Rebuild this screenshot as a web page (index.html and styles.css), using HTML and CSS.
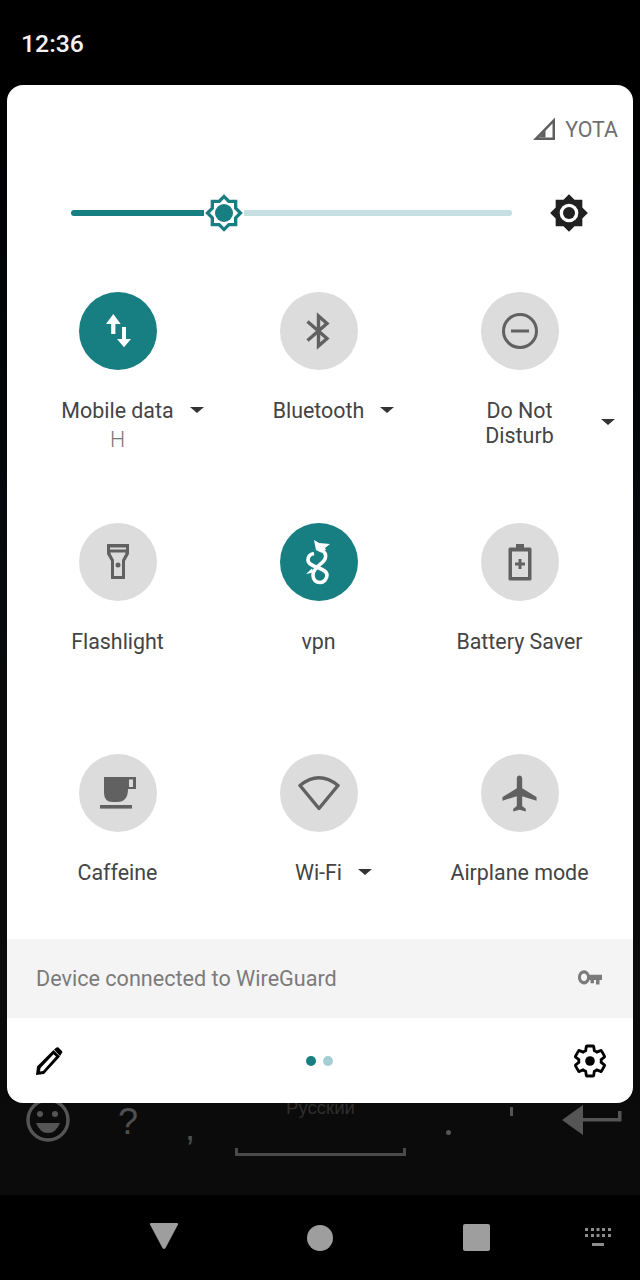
FILE: index.html
```html
<!DOCTYPE html>
<html lang="en">
<head>
    <meta charset="UTF-8">
    <title>Quick settings</title>
    <link rel="stylesheet" href="styles.css">
</head>
<body>
    <div class="status">
        <span class="clock">12:36</span>
    </div>

    <div class="panel">
        <div class="carrier">
            <svg class="signal" width="26" height="26" viewBox="0 0 26 26">
                <path d="M23 1.500 L1 24 H23 Z M20.500 7.500 V21.500 H7 Z" fill="#5f5f5f" fill-rule="evenodd"/>
                <path d="M13.500 14 L7 21.500 H13.500 Z" fill="#5f5f5f"/>
            </svg>
            <span>YOTA</span>
        </div>

        <div class="brightness">
            <div class="slider">
                <div class="track-on"></div>
                <svg class="thumb" width="40" height="40" viewBox="0 0 24 24">
                    <path d="M12 1.500 L15.100 4.500 H19.500 V8.900 L22.500 12 L19.500 15.100 V19.500 H15.100 L12 22.500 L8.900 19.500 H4.500 V15.100 L1.500 12 L4.500 8.900 V4.500 H8.900 Z" fill="#fff"/>
                    <path d="M20 8.690 V4 H15.310 L12 .69 8.690 4 H4 V8.690 L.69 12 4 15.310 V20 H8.690 L12 23.310 15.310 20 H20 V15.310 L23.310 12 Z M18 14.480 V18 H14.480 L12 20.480 9.520 18 H6 V14.480 L3.520 12 6 9.520 V6 H9.520 L12 3.520 14.480 6 H18 V9.520 L20.480 12 Z" fill="#177e82"/>
                    <circle cx="12" cy="12" r="5.400" fill="#177e82"/>
                </svg>
                <div class="track-off"></div>
            </div>
            <svg class="auto" width="40" height="40" viewBox="0 0 24 24">
                <path d="M20 8.690 V4 H15.310 L12 .69 8.690 4 H4 V8.690 L.69 12 4 15.310 V20 H8.690 L12 23.310 15.310 20 H20 V15.310 L23.310 12 Z" fill="#212121"/>
                <circle cx="12" cy="12" r="5.600" fill="#fff"/>
                <circle cx="12" cy="12" r="3.600" fill="#212121"/>
            </svg>
        </div>

        <div class="tiles">
            <div class="tile">
                <div class="circle on">
                    <svg width="40" height="40" viewBox="0 0 40 40">
                        <path d="M15.300 3 L8 13 H13.200 V23 H17.400 V13 L22.700 13 Z M24 16 H28 V28 H33 L26 36.200 L19 28 H24 Z" fill="#fff"/>
                    </svg>
                </div>
                <div class="label">
                    <span>Mobile data</span><i class="caret"></i>
                </div>
                <div class="sub">H</div>
            </div>
            <div class="tile">
                <div class="circle">
                    <svg width="40" height="40" viewBox="0 0 40 40">
                        <path d="M8.500 10.500 L28 27.500 L19.500 35 V5 L28 12.500 L8.500 29.500" fill="none" stroke="#616161" stroke-width="3.400"/>
                    </svg>
                </div>
                <div class="label">
                    <span>Bluetooth</span><i class="caret"></i>
                </div>
            </div>
            <div class="tile">
                <div class="circle">
                    <svg width="40" height="40" viewBox="0 0 40 40">
                        <circle cx="20" cy="20" r="16.500" fill="none" stroke="#616161" stroke-width="3"/>
                        <rect x="11" y="18.500" width="18" height="3" fill="#616161"/>
                    </svg>
                </div>
                <div class="label wrap">
                    <span>Do Not<br>Disturb</span><i class="caret"></i>
                </div>
            </div>

            <div class="tile">
                <div class="circle">
                    <svg width="40" height="40" viewBox="0 0 40 40">
                        <path d="M9 2 H31 V12 L27 19 V37 H13 V19 L9 12 Z" fill="#616161"/>
                        <rect x="12" y="5.500" width="16" height="2" fill="#dcdcdc"/>
                        <path d="M12.500 10.500 H27.500 V11.500 L24 18 V34 H16 V18 L12.500 11.500 Z" fill="#dcdcdc"/>
                        <circle cx="20" cy="23" r="2.500" fill="#616161"/>
                    </svg>
                </div>
                <div class="label"><span>Flashlight</span></div>
            </div>
            <div class="tile">
                <div class="circle on">
                    <!-- wireguard dragon -->
                    <svg width="40" height="56" viewBox="0 0 40 56">
                        <path d="M15 6 L20 9 L31 10 L26 14 L27 16 L21 16 L23 19 L17 16 Z" fill="#fff"/>
                        <path d="M19 15 C25 16 28 20 26 25 C24 30 14 33 14 41 C14 46 17 48.500 21 48.500 C25 48.500 28 45 28 41 C28 33 9 34 9 26 C9 22 12 20 15 19.500" fill="none" stroke="#fff" stroke-width="3.600"/>
                        <path d="M7 40 L13 34.500 L14.500 38.500 Z" fill="#fff"/>
                    </svg>
                </div>
                <div class="label"><span>vpn</span></div>
            </div>
            <div class="tile">
                <div class="circle">
                    <svg width="40" height="40" viewBox="0 0 40 40">
                        <path d="M16 2 H24 V5.500 H30 Q31.500 5.500 31.500 7 V37 Q31.500 38.500 30 38.500 H10 Q8.500 38.500 8.500 37 V7 Q8.500 5.500 10 5.500 H16 Z" fill="#616161"/>
                        <rect x="12" y="9.500" width="16" height="25.500" fill="#dcdcdc"/>
                        <path d="M18.500 17 H21.500 V20.500 H25 V23.500 H21.500 V27 H18.500 V23.500 H15 V20.500 H18.500 Z" fill="#616161"/>
                    </svg>
                </div>
                <div class="label"><span>Battery Saver</span></div>
            </div>

            <div class="tile">
                <div class="circle">
                    <svg width="40" height="40" viewBox="0 0 40 40">
                        <path d="M6 4 H38 V16 H30 Q30 29 19 29 H15 Q6 29 6 20 Z M31 6.500 V14 H35 V6.500 Z" fill="#616161" fill-rule="evenodd"/>
                        <rect x="2" y="32" width="32" height="3.600" fill="#616161"/>
                    </svg>
                </div>
                <div class="label"><span>Caffeine</span></div>
            </div>
            <div class="tile">
                <div class="circle">
                    <svg width="44" height="40" viewBox="0 0 44 40">
                        <path d="M3 12.500 Q22 -3 41 12.500 L22 35.500 Z" fill="none" stroke="#616161" stroke-width="3.400" stroke-linejoin="round"/>
                    </svg>
                </div>
                <div class="label">
                    <span>Wi-Fi</span><i class="caret"></i>
                </div>
            </div>
            <div class="tile">
                <div class="circle">
                    <svg width="43" height="43" viewBox="0 0 24 24">
                        <path d="M21.500 16 V14 L13.500 9 V3.500 C13.500 2.670 12.830 2 12 2 S10.500 2.670 10.500 3.500 V9 L2.500 14 V16 L10.500 13.500 V19 L8.500 20.500 V22 L12 21 L15.500 22 V20.500 L13.500 19 V13.500 Z" fill="#616161"/>
                    </svg>
                </div>
                <div class="label"><span>Airplane mode</span></div>
            </div>
        </div>

        <div class="banner">
            <span>Device connected to WireGuard</span>
            <svg class="key" width="26" height="18" viewBox="0 0 26 14" preserveAspectRatio="none">
                <path d="M7 1 C9.500 1 11.600 2.400 12.600 4.500 H25 V8.500 H22.500 V12 H19 V8.500 H17 V11 H13.500 V8.500 H12.600 C11.600 10.600 9.500 12 7 12 C3.700 12 1 9.500 1 6.500 C1 3.500 3.700 1 7 1 Z M7 3.500 C5.300 3.500 3.900 4.800 3.900 6.500 C3.900 8.200 5.300 9.500 7 9.500 C8.700 9.500 10.100 8.200 10.100 6.500 C10.100 4.800 8.700 3.500 7 3.500 Z" fill="#7b7b7b" fill-rule="evenodd"/>
            </svg>
        </div>

        <div class="footer">
            <svg width="30" height="30" viewBox="0 0 30 30">
                <path d="M2 29 L3 20.500 L19.500 4 L26 10.500 L10 28 Z M6.500 22 L6 25.500 L9 25 L22 10.500 L19.500 8.200 Z" fill="#000" fill-rule="evenodd"/>
                <path d="M20 3.500 L22.500 1.500 Q23.500 .8 24.500 1.500 L28 5 Q28.800 6 28 7 L26 10 Z" fill="#000"/>
            </svg>
            <div class="dots">
                <i class="dot"></i>
                <i class="dot off"></i>
            </div>
            <svg width="36" height="36" viewBox="0 0 24 24">
                <path d="M19.430 12.980 C19.470 12.660 19.500 12.340 19.500 12 S19.470 11.340 19.430 11.020 L21.540 9.370 C21.730 9.220 21.780 8.950 21.660 8.730 L19.660 5.270 C19.540 5.050 19.270 4.970 19.050 5.050 L16.560 6.050 C16.040 5.650 15.480 5.320 14.870 5.070 L14.490 2.420 C14.460 2.180 14.250 2 14 2 H10 C9.750 2 9.540 2.180 9.510 2.420 L9.130 5.070 C8.520 5.320 7.960 5.660 7.440 6.050 L4.950 5.050 C4.720 4.960 4.460 5.050 4.340 5.270 L2.340 8.730 C2.210 8.950 2.270 9.220 2.460 9.370 L4.570 11.020 C4.530 11.340 4.500 11.670 4.500 12 S4.530 12.660 4.570 12.980 L2.460 14.630 C2.270 14.780 2.220 15.050 2.340 15.270 L4.340 18.730 C4.460 18.950 4.730 19.030 4.950 18.950 L7.440 17.950 C7.960 18.350 8.520 18.680 9.130 18.930 L9.510 21.580 C9.540 21.820 9.750 22 10 22 H14 C14.250 22 14.460 21.820 14.490 21.580 L14.870 18.930 C15.480 18.680 16.040 18.340 16.560 17.950 L19.050 18.950 C19.280 19.040 19.540 18.950 19.660 18.730 L21.660 15.270 C21.780 15.050 21.730 14.780 21.540 14.630 Z" fill="none" stroke="#000" stroke-width="1.900"/>
                <circle cx="12" cy="12" r="3.200" fill="#000"/>
            </svg>
        </div>
    </div>

    <div class="keyboard">
        <svg class="kb-smile" width="46" height="46" viewBox="0 0 46 46">
            <circle cx="23" cy="22" r="20" fill="none" stroke="#555" stroke-width="3.400"/>
            <circle cx="15" cy="16" r="3" fill="#555"/>
            <circle cx="30" cy="16" r="3" fill="#555"/>
            <path d="M11 25 H35 Q31 35 23 35 Q15 35 11 25 Z" fill="#555"/>
        </svg>
        <span class="kb-key kb-q">?</span>
        <span class="kb-key kb-comma">,</span>
        <div class="kb-space">
            <span>Русский</span>
            <i></i>
        </div>
        <span class="kb-dot"></span>
        <span class="kb-tick"></span>
        <svg class="kb-enter" width="62" height="30" viewBox="0 0 62 30">
            <path d="M1 15 L22 0 V13 H57 V6 H60.500 V16.500 H22 V30 Z" fill="#555"/>
        </svg>
    </div>

    <div class="nav">
        <svg class="nav-back" width="30" height="30" viewBox="0 0 30 30">
            <path d="M2 3 Q.5 3 1 4.500 L13.500 28 Q15 30 16.500 28 L29 4.500 Q29.500 3 28 3 Z" fill="#9e9e9e"/>
        </svg>
        <i class="nav-home"></i>
        <i class="nav-recent"></i>
        <svg class="nav-kb" width="28" height="20" viewBox="0 0 28 20">
            <path d="M1 1 H4 V4 H1 Z M7 1 H10 V4 H7 Z M12.500 1 H15.500 V4 H12.500 Z M18 1 H21 V4 H18 Z M24 1 H27 V4 H24 Z M1 7 H4 V10 H1 Z M7 7 H10 V10 H7 Z M12.500 7 H15.500 V10 H12.500 Z M18 7 H21 V10 H18 Z M24 7 H27 V10 H24 Z M8 16 H20 V19 H8 Z" fill="#8c8c8c"/>
        </svg>
    </div>
</body>
</html>
```

FILE: styles.css
```css
*{
    margin:0;
    padding:0;
    box-sizing:border-box;
}

body{
    width:640px;
    height:1280px;
    overflow:hidden;
    background:linear-gradient(#000 85px, #05080c 500px, #0a0a0a 700px);
    font-family:Roboto, "Noto Sans", sans-serif;
}

i{
    display:block;
}

.status{
    height:85px;
    padding:30px 0 0 21px;
    background:#000;
}
.status .clock{
    display:block;
    font-size:24.8px;
    line-height:28px;
    font-weight:500;
    color:#f2f2f2;
}

/* panel */
.panel{
    position:relative;
    z-index:1;
    width:626px;
    height:1018px;
    margin:0 7px;
    background:#fff;
    border-radius:16px;
    overflow:hidden;
    display:flex;
    flex-direction:column;
}

.carrier{
    height:66px;
    padding:24px 15px 0 0;
    display:flex;
    justify-content:flex-end;
    align-items:center;
    gap:7px;
    font-size:21.4px;
    color:#6f6f6f;
}
.carrier span{
    line-height:30px;
}
.signal{
    margin-bottom:2px;
}

.brightness{
    height:86px;
    padding:0 44px 0 64px;
    margin-top:19px;
    display:flex;
    align-items:center;
    justify-content:space-between;
}
.slider{
    width:441px;
    display:flex;
    align-items:center;
}
.track-on{
    width:133px;
    height:6px;
    background:#177e82;
    border-radius:3px 0 0 3px;
}
.thumb{
    flex:none;
}
.track-off{
    flex:1;
    height:6px;
    background:#c5dfe2;
    border-radius:0 3px 3px 0;
}

.tiles{
    height:683px;
    padding:36px 11px 0 10px;
    display:grid;
    grid-template-columns:repeat(3, 201px);
    grid-auto-rows:231px;
}
.tile{
    display:flex;
    flex-direction:column;
    align-items:center;
}
.circle{
    width:78px;
    height:78px;
    border-radius:50%;
    background:#dcdcdc;
    display:flex;
    align-items:center;
    justify-content:center;
}
.circle.on{
    background:#177e82;
}
.label{
    position:relative;
    margin-top:28px;
    font-size:21.4px;
    line-height:25px;
    color:#444;
    text-align:center;
}
.caret{
    position:absolute;
    left:100%;
    top:9px;
    margin-left:16px;
    width:0;
    height:0;
    border-left:7px solid transparent;
    border-right:7px solid transparent;
    border-top:6px solid #333;
}
.label.wrap .caret{
    margin-left:47px;
    top:21px;
}
.sub{
    margin-top:5px;
    font-size:21.4px;
    line-height:24px;
    font-weight:300;
    color:#777;
}

.banner{
    height:79px;
    padding:0 30px 0 29px;
    background:#f4f4f4;
    display:flex;
    align-items:center;
    justify-content:space-between;
    font-size:21.6px;
    color:#7b7b7b;
}
.key{
    margin-top:-2px;
}

.footer{
    flex:1;
    padding:0 25px 0 27px;
    display:flex;
    align-items:center;
    justify-content:space-between;
}
.dots{
    display:flex;
    gap:7px;
    margin-left:3px;
}
.dot{
    width:10px;
    height:10px;
    border-radius:50%;
    background:#177e82;
}
.dot.off{
    background:#a3cfd4;
}

/* dimmed keyboard behind the panel */
.keyboard{
    position:relative;
    height:92px;
    background:#0b0b0b;
}
.kb-smile{
    position:absolute;
    left:25px;
    top:-5px;
}
.kb-key{
    position:absolute;
    font-family:"Liberation Sans", sans-serif;
    color:#4f4f4f;
}
.kb-q{
    left:118px;
    top:-1px;
    font-size:36px;
    line-height:40px;
}
.kb-comma{
    left:185px;
    top:5px;
    font-size:36px;
    line-height:40px;
}
.kb-space{
    position:absolute;
    left:235px;
    top:-5px;
    width:171px;
    height:58px;
    text-align:center;
    font-family:"Liberation Sans", sans-serif;
    font-size:18.6px;
    line-height:20px;
    color:#2e2e2e;
}
.kb-space i{
    position:absolute;
    left:0;
    bottom:0;
    width:100%;
    height:8px;
    border:solid #4a4a4a;
    border-width:0 3px 3px;
}
.kb-dot{
    position:absolute;
    left:446px;
    top:27px;
    width:5px;
    height:5px;
    border-radius:50%;
    background:#555;
}
.kb-tick{
    position:absolute;
    left:510px;
    top:4px;
    width:3px;
    height:9px;
    background:#555;
}
.kb-enter{
    position:absolute;
    left:561px;
    top:2px;
}

.nav{
    position:relative;
    height:85px;
    background:#000;
}
.nav-back{
    position:absolute;
    left:149px;
    top:25px;
}
.nav-home{
    position:absolute;
    left:307px;
    top:30px;
    width:26px;
    height:26px;
    border-radius:50%;
    background:#9e9e9e;
}
.nav-recent{
    position:absolute;
    left:463px;
    top:29px;
    width:27px;
    height:27px;
    border-radius:2px;
    background:#9e9e9e;
}
.nav-kb{
    position:absolute;
    left:584px;
    top:32px;
}
```
